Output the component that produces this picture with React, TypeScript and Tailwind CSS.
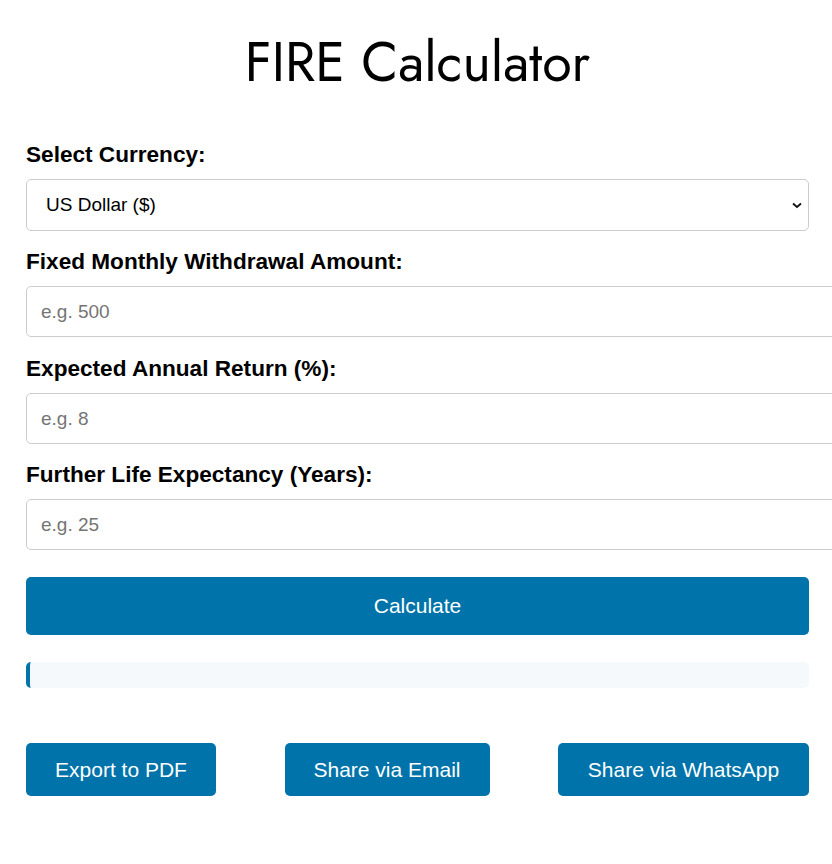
import { useState } from "react";

const fields = [
  { label: "Fixed Monthly Withdrawal Amount:", placeholder: "e.g. 500", gap: "mb-[19px]" },
  { label: "Expected Annual Return (%):", placeholder: "e.g. 8", gap: "mb-[18px]" },
  { label: "Further Life Expectancy (Years):", placeholder: "e.g. 25", gap: "mb-[18px]" },
];

export default function App() {
  const [currency, setCurrency] = useState("USD");

  return (
    <div className="min-h-screen overflow-hidden bg-white font-['Liberation_Sans',Arial,sans-serif] text-black">
      <div className="px-[26px] pt-[26px] pr-[23px]">
        <h1 className="mb-[44px] text-center font-['Jost','Lato',sans-serif] text-[54px] font-normal leading-[72px]">
          FIRE Calculator
        </h1>

        <label className="mb-[12px] block text-[22.6px] font-bold leading-[25px]">Select Currency:</label>
        <div className="relative mb-[18px]">
          <select
            value={currency}
            onChange={(e) => setCurrency(e.target.value)}
            className="h-[52px] w-full appearance-none rounded-[5px] border border-[#ccc] bg-white pl-[19px] text-[19px] outline-none"
          >
            <option value="USD">US Dollar ($)</option>
            <option value="EUR">Euro (€)</option>
            <option value="GBP">British Pound (£)</option>
            <option value="INR">Indian Rupee (₹)</option>
          </select>
          <svg
            className="pointer-events-none absolute right-[7px] top-1/2 h-[10px] w-[10px] -translate-y-1/2"
            viewBox="0 0 10 10"
            fill="none"
            stroke="#111"
            strokeWidth="1.8"
          >
            <path d="M1 3.5 L5 7 L9 3.5" />
          </svg>
        </div>

        {fields.map((f) => (
          <div key={f.label} className={f.gap}>
            <label className="mb-[12px] block text-[22.6px] font-bold leading-[25px]">{f.label}</label>
            <input
              type="number"
              placeholder={f.placeholder}
              className="h-[51px] w-[calc(100%+40px)] rounded-[5px] border border-[#ccc] bg-white px-[14px] text-[19px] outline-none placeholder:text-[#757575]"
            />
          </div>
        ))}

        <button className="mt-[9px] h-[58px] w-full rounded-[5px] bg-[#0073aa] text-[21px] text-white">
          Calculate
        </button>

        <div className="mt-[27px] h-[26px] rounded-[5px] border-l-4 border-[#0073aa] bg-[#f5f9fc]"></div>

        <div className="mt-[55px] flex justify-between">
          <button className="h-[53px] w-[190px] rounded-[5px] bg-[#0073aa] text-[21px] text-white">Export to PDF</button>
          <button className="h-[53px] w-[205px] rounded-[5px] bg-[#0073aa] text-[21px] text-white">Share via Email</button>
          <button className="h-[53px] w-[251px] rounded-[5px] bg-[#0073aa] text-[21px] text-white">Share via WhatsApp</button>
        </div>
      </div>
    </div>
  );
}
